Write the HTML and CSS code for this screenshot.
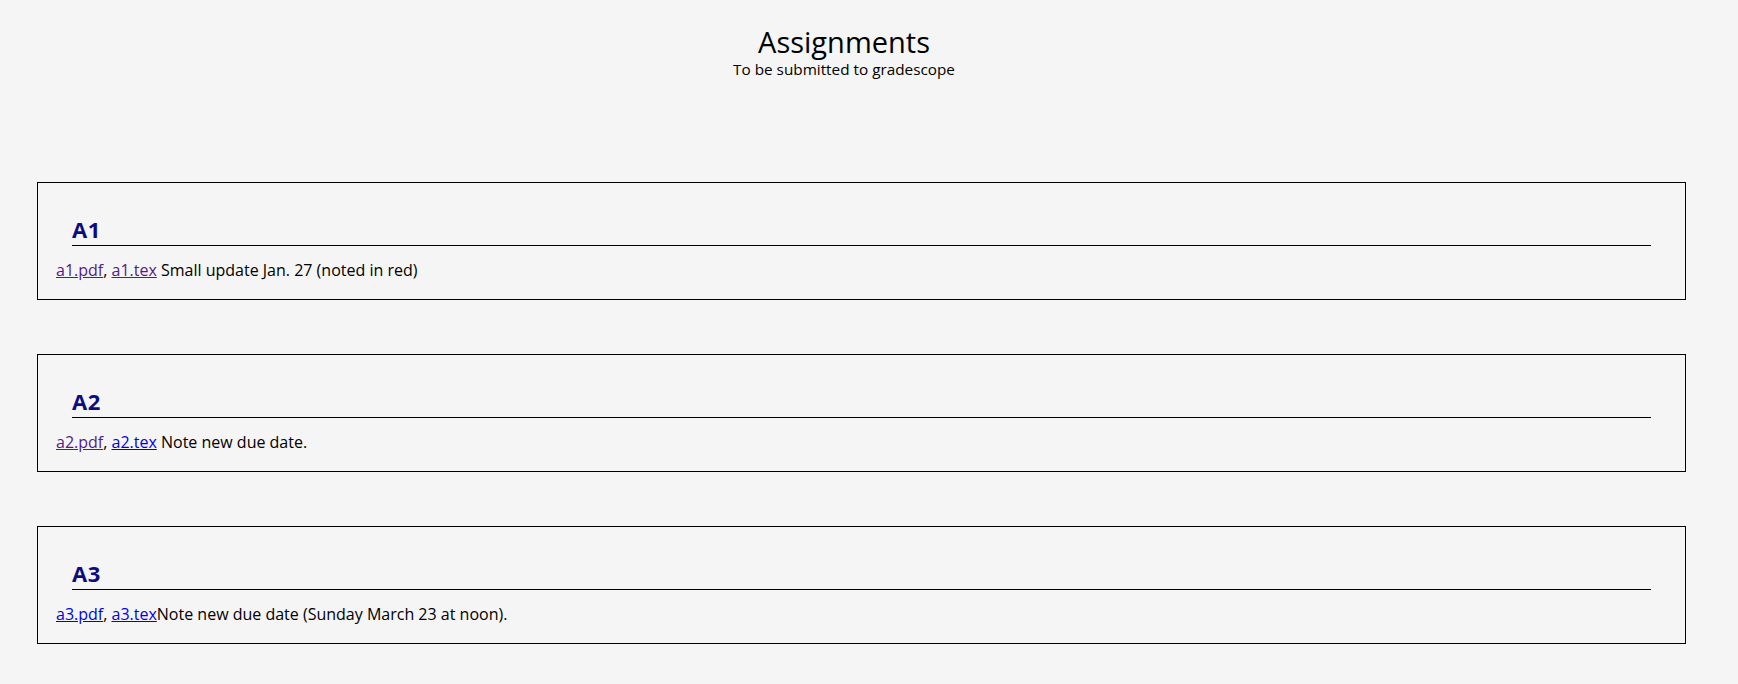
FILE: index.html
```html
<!DOCTYPE html>
<html>
<head>
<meta charset="utf-8">
<title>Assignments</title>
<link rel="stylesheet" href="styles.css">
</head>
<body>
<header class="page-header">
  <h1 class="title">Assignments</h1>
  <p class="subtitle">To be submitted to gradescope</p>
</header>
<main class="list">
  <section class="card">
    <h2 class="card-title">A1</h2>
    <p class="card-text"><a class="visited" href="#a1pdf">a1.pdf</a>, <a class="visited" href="#a1tex">a1.tex</a> Small update Jan. 27 (noted in red)</p>
  </section>
  <section class="card">
    <h2 class="card-title">A2</h2>
    <p class="card-text"><a class="visited" href="#a2pdf">a2.pdf</a>, <a class="link" href="#a2tex">a2.tex</a> Note new due date.</p>
  </section>
  <section class="card">
    <h2 class="card-title">A3</h2>
    <p class="card-text"><a class="link" href="#a3pdf">a3.pdf</a>, <a class="link" href="#a3tex">a3.tex</a>Note new due date (Sunday March 23 at noon).</p>
  </section>
</main>
</body>
</html>
```
FILE: styles.css
```css
html, body {
  background: #f5f5f5;
}
body {
  margin: 0;
  padding: 24px 52px 0 37px;
  font-family: "Open Sans", "DejaVu Sans", sans-serif;
  color: #000;
}
.page-header {
  text-align: center;
  padding-right: 35px;
}
.title {
  margin: 0;
  font-size: 29px;
  font-weight: normal;
  line-height: 36px;
}
.subtitle {
  margin: 0;
  font-size: 15.3px;
  line-height: 18px;
}
.list {
  display: flex;
  flex-direction: column;
  gap: 54px;
  padding-top: 104px;
}
.card {
  border: 1px solid #000;
  padding: 30px 18px 16px;
  height: 118px;
  box-sizing: border-box;
}
.card-title {
  margin: 0 16px;
  color: #0c0c80;
  font-size: 22px;
  line-height: 32px;
  letter-spacing: 0.5px;
  border-bottom: 1px solid #000;
}
.card-text {
  margin: 13px 0 0;
  font-size: 16px;
  line-height: 22px;
}
.visited { color: #551a8b; }
.link { color: #0000ee; }
```
